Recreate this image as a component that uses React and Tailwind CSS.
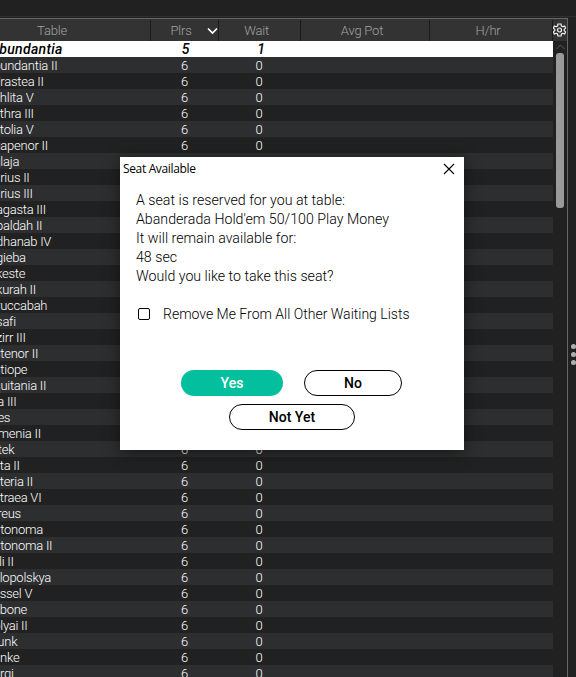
const tables = [
  "Abundantia II", "Adrastea II", "Aehlita V", "Aethra III", "Aetolia V",
  "Agapenor II", "Aglaja", "Aurius II", "Aurius III", "Alagasta III",
  "Albaldah II", "Aldhanab IV", "Algieba", "Alkeste", "Alkurah II",
  "Alruccabah", "Alsafi", "Alzirr III", "Antenor II", "Antiope",
  "Aquitania II", "Ara III", "Ares", "Armenia II", "Artek", "Asta II",
  "Asteria II", "Astraea VI", "Atreus", "Autonoma", "Autonoma II",
  "Avli II", "Belopolskya", "Bessel V", "Bebone", "Bolyai II", "Brunk",
  "Bunke", "Burgi",
];

function Header() {
  const cell = "flex items-center justify-center border-r border-[#1c1c1c]";
  return (
    <div className="flex h-[22px] shrink-0 bg-[#333333] pt-px text-[13px] tracking-[-0.2px] text-[#a2a2a2]">
      <div className={`${cell} w-[151px] pr-[46px]`}>Table</div>
      <div className={`${cell} w-[68px] gap-[15px] pl-[19px]`}>
        Plrs
        <svg width="11" height="8" viewBox="0 0 11 8" fill="none" stroke="#fff" strokeWidth="1.7">
          <path d="M1 1.500 L5.500 6 L10 1.500" />
        </svg>
      </div>
      <div className={`${cell} w-[82px] pr-[6px]`}>Wait</div>
      <div className={`${cell} w-[129px] pr-[6px]`}>Avg Pot</div>
      <div className={`${cell} w-[123px] pr-[6px]`}>H/hr</div>
      <div className="flex w-[14px] items-center pb-px">
        <svg className="shrink-0" width="13" height="14" viewBox="0 0 13 14" fill="none" stroke="#f2f2f2" strokeWidth="1.2">
          <path d="M5 1h3l.5 2 1.200.7 1.900-.6 1 2L11.200 6.400v1.200l1.400 1.300-1 2-1.900-.6-1.200.7-.5 2H5l-.5-2-1.200-.7-1.900.6-1-2 1.400-1.300V6.400L.4 5.100l1-2 1.900.6L4.500 3z" />
          <circle cx="6.500" cy="7" r="2" />
        </svg>
      </div>
    </div>
  );
}

function Row({ name, striped }) {
  return (
    <div className={`flex h-4 shrink-0 whitespace-nowrap text-[13px] leading-[18px] ${striped ? "bg-[#2d2e30]" : "bg-[#212121]"}`}>
      <div className="w-[151px] tracking-[-0.25px]"><span className="-ml-[14.5px]">{name}</span></div>
      <div className="w-[67px] text-center">6</div>
      <div className="w-[82px] text-center">0</div>
    </div>
  );
}

function Dialog() {
  return (
    <div className="absolute left-[120px] top-[157px] flex h-[293px] w-[344px] flex-col bg-white text-black shadow-[0_3px_14px_rgba(0,0,0,0.5)]">
      <div className="flex h-[24px] items-center justify-between pl-[3px] pr-[9px] font-['Open_Sans',sans-serif] text-[12px] font-normal tracking-[-0.35px]">
        <span>Seat Available</span>
        <svg width="12" height="12" viewBox="0 0 12 12" stroke="#000" strokeWidth="1.1">
          <path d="M1 1 L11 11 M11 1 L1 11" />
        </svg>
      </div>
      <div className="px-4 pt-[10px] text-[14.2px] leading-[19px]">
        <p>A seat is reserved for you at table:</p>
        <p>Abanderada Hold'em 50/100 Play Money</p>
        <p>It will remain available for:</p>
        <p>48 sec</p>
        <p>Would you like to take this seat?</p>
      </div>
      <label className="mt-[19px] flex h-[19px] items-center gap-[13px] pl-[18px] text-[14px]">
        <span className="-mt-px size-[12px] rounded-[2px] border border-black" />
        Remove Me From All Other Waiting Lists
      </label>
      <div className="mt-[46px] flex gap-[21px] pl-[61px] text-[14px] font-medium">
        <button className="h-[26px] w-[102px] rounded-full bg-[#03bf9d] text-white">Yes</button>
        <button className="h-[26px] w-[98px] rounded-full border border-black">No</button>
      </div>
      <button className="ml-[109px] mt-[8px] h-[26px] w-[126px] rounded-full border border-black text-[14px] font-medium">Not Yet</button>
    </div>
  );
}

export default function App() {
  return (
    <div className="relative flex h-[677px] w-[576px] flex-col overflow-hidden bg-[#212121] font-[Roboto,sans-serif] font-light text-white">
      <div className="h-[17px] shrink-0 border-b border-[#303030]" />
      <div className="mt-px flex min-h-0 flex-1">
        <div className="flex w-[568px] flex-col overflow-hidden border-r border-t border-[#666666]">
          <Header />
          <div className="flex min-h-0 flex-1">
            <div className="flex w-[553px] flex-col overflow-hidden">
              <div className="flex h-4 shrink-0 whitespace-nowrap bg-white text-[14px] font-medium italic leading-[17px] text-black">
                <div className="w-[151px]"><span className="-ml-[10px] tracking-[0.3px]">Abundantia</span></div>
                <div className="w-[69px] text-center">5</div>
                <div className="w-[82px] text-center">1</div>
              </div>
              {tables.map((name, i) => <Row key={name} name={name} striped={i % 2 === 0} />)}
            </div>
            <div className="flex w-[14px] flex-col items-center gap-[3px] pt-[3px]">
              <svg width="9" height="6" viewBox="0 0 9 6" fill="none" stroke="#5a5a5a">
                <path d="M.5 5 L4.500 1 L8.500 5" />
              </svg>
              <div className="h-[155px] w-[8px] rounded-[3px] bg-[#9a9a9a]" />
            </div>
          </div>
        </div>
        <div className="flex flex-1 flex-col items-end gap-[3px] pt-[326px]">
          <i className="size-[5px] rounded-full bg-[#b0b0b0]" />
          <i className="size-[5px] rounded-full bg-[#b0b0b0]" />
          <i className="size-[5px] rounded-full bg-[#b0b0b0]" />
        </div>
      </div>
      <Dialog />
    </div>
  );
}
